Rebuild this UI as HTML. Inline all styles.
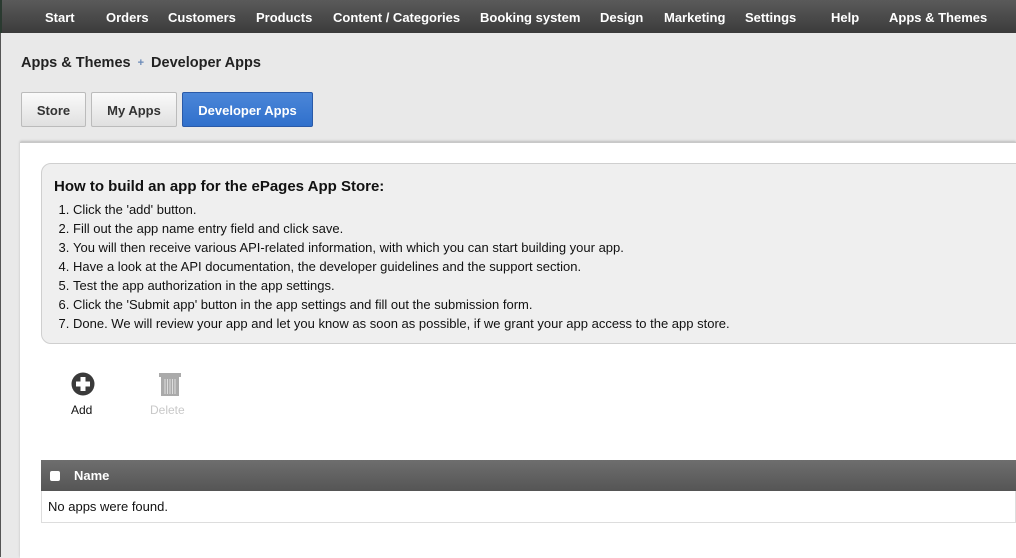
<!DOCTYPE html>
<html><head><style>
body{margin:0;width:1016px;height:557px;overflow:hidden;background:#e9e9e9;font-family:"Liberation Sans",Arial,sans-serif;position:relative}
.nav{position:absolute;left:0;top:0;width:1016px;height:33px;background:linear-gradient(#5a5a5a,#3b3b3b);border-left:2px solid #2a3a30}
.nav span{position:absolute;top:10px;color:#fff;font-weight:bold;font-size:13px}
.edge{position:absolute;left:0;top:33px;width:1px;height:524px;background:#555}
.crumb{position:absolute;left:21px;top:55px;font-size:14.5px;font-weight:bold;color:#222}
.crumb i{font-style:normal;color:#6a8ab8;font-size:11px;margin:0 7px;position:relative;top:-1px}
.tab{position:absolute;top:92px;height:35px;box-sizing:border-box;border:1px solid #bbb;border-radius:2px;background:linear-gradient(#fafafa,#e0e0e0);font-size:13px;font-weight:bold;color:#333;text-align:center;line-height:35px}
.tab.a{background:linear-gradient(#4b86d8,#3070cc);border-color:#2a5aa8;color:#fff}
.panel{position:absolute;left:20px;top:142px;width:996px;height:415px;background:#fff;border-top:1px solid #c8c8c8;box-shadow:0 -1px 2px #bbb}
.info{position:absolute;left:21px;top:20px;width:990px;height:181px;box-sizing:border-box;background:#efefef;border:1px solid #cfcfcf;border-radius:10px}
.info h3{margin:0;position:absolute;left:12px;top:14px;font-size:15px;color:#111}
.info ol{margin:0;position:absolute;left:11px;top:36px;padding-left:20px;font-size:13px;color:#111;line-height:19px;white-space:nowrap}
.lbl{position:absolute;font-size:12px}
.thead{position:absolute;left:21px;top:317px;width:975px;height:31px;background:linear-gradient(#6e6e6e,#555);}
.thead span{position:absolute;left:33px;top:8px;color:#fff;font-weight:bold;font-size:13px}
.cb{position:absolute;left:9px;top:11px;width:10px;height:10px;background:#fff;border-radius:2px}
.row{position:absolute;left:21px;top:348px;width:975px;height:32px;box-sizing:border-box;border:1px solid #ddd;border-top:none;font-size:13px;padding:8px 0 0 6px;color:#111}
</style></head><body>
<div class="nav">
<span style="left:43px">Start</span><span style="left:104px">Orders</span><span style="left:166px">Customers</span><span style="left:254px">Products</span><span style="left:331px">Content / Categories</span><span style="left:478px">Booking system</span><span style="left:598px">Design</span><span style="left:662px">Marketing</span><span style="left:743px">Settings</span><span style="left:829px">Help</span><span style="left:887px">Apps &amp; Themes</span>
</div>
<div class="edge"></div>
<div class="crumb">Apps &amp; Themes<i>+</i>Developer Apps</div>
<div class="tab" style="left:21px;width:65px">Store</div>
<div class="tab" style="left:91px;width:86px">My Apps</div>
<div class="tab a" style="left:182px;width:131px">Developer Apps</div>
<div class="panel">
<div class="info"><h3>How to build an app for the ePages App Store:</h3>
<ol>
<li>Click the 'add' button.</li>
<li>Fill out the app name entry field and click save.</li>
<li>You will then receive various API-related information, with which you can start building your app.</li>
<li>Have a look at the API documentation, the developer guidelines and the support section.</li>
<li>Test the app authorization in the app settings.</li>
<li>Click the 'Submit app' button in the app settings and fill out the submission form.</li>
<li>Done. We will review your app and let you know as soon as possible, if we grant your app access to the app store.</li>
</ol></div>
<svg style="position:absolute;left:51px;top:229px" width="24" height="24" viewBox="0 0 24 24"><circle cx="12" cy="12" r="11.5" fill="#3a3a3a"/><path d="M9.5 5h5v4.5H19v5h-4.5V19h-5v-4.5H5v-5h4.5z" fill="#fff"/></svg>
<div class="lbl" style="left:51px;top:260px;color:#111">Add</div>
<svg style="position:absolute;left:138px;top:228px" width="24" height="26" viewBox="0 0 24 26"><rect x="1" y="2" width="22" height="4" fill="#aaa"/><rect x="3" y="6" width="18" height="19" fill="#aaa"/><path d="M7 8v15M9.5 8v15M12 8v15M14.5 8v15M17 8v15" stroke="#ddd" stroke-width="1"/></svg>
<div class="lbl" style="left:130px;top:260px;color:#c8c8c8">Delete</div>
<div class="thead"><div class="cb"></div><span>Name</span></div>
<div class="row">No apps were found.</div>
</div>
</body></html>
